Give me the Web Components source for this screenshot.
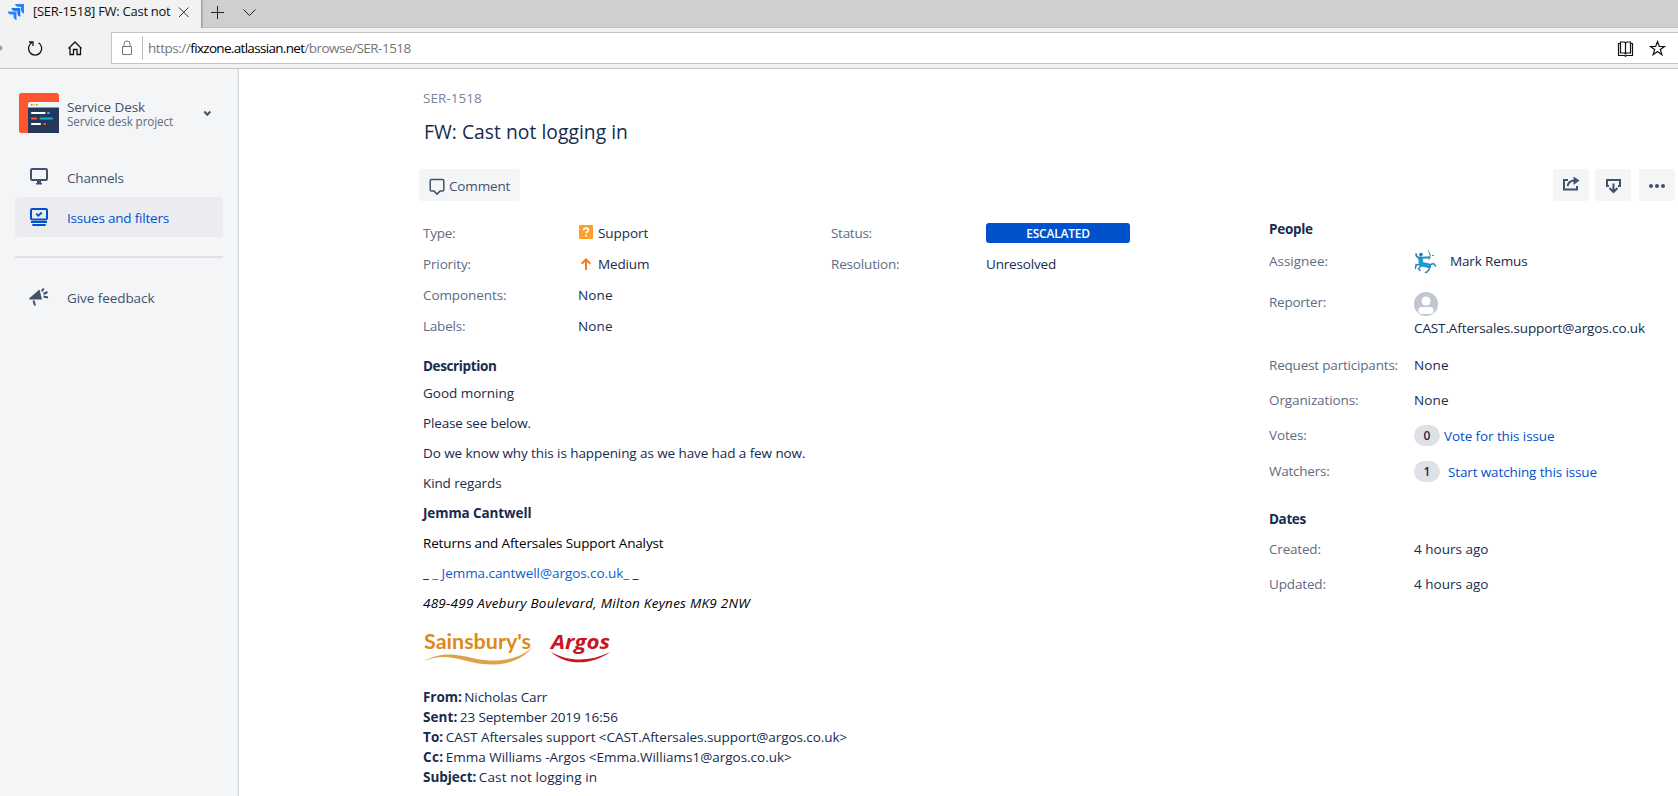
<!DOCTYPE html>
<html lang="en">
<head>
<meta charset="utf-8">
<title>[SER-1518] FW: Cast not logging in</title>
<style>
body{margin:0;background:#fff;overflow:hidden}
</style>
</head>
<body>
<app-window></app-window>
<script>
const define = (name, css, html, after) => customElements.define(name, class extends HTMLElement {
  connectedCallback() {
    if (this.shadowRoot) return;
    const t = document.createElement('template');
    t.innerHTML = `<style>*{box-sizing:border-box}${css}</style>${typeof html === 'function' ? html(this) : html}`;
    this.attachShadow({ mode: 'open' }).append(t.content.cloneNode(true));
    if (after) after(this);
  }
});

define('app-window', `
:host{display:flex;flex-direction:column;width:1678px;height:796px;overflow:hidden;font:13.5px/20px "Open Sans","Noto Sans",sans-serif;color:#172b4d}
main{display:flex;flex:1;min-height:0}`,
`<browser-tabs></browser-tabs><browser-toolbar></browser-toolbar>
<main><side-nav></side-nav><issue-page></issue-page></main>`);

define('browser-tabs', `
:host{display:flex;height:28px;background:#cfcfcf;border-bottom:1px solid #c0c0c0;flex:none}
.tab{display:flex;width:201px;height:28px;background:#f2f2f2;padding-left:7px;box-shadow:1px 0 2px #8a8a8a;clip-path:inset(0 -5px 0 0);color:#111}
.t{width:140px;margin:1px 0 0 8px;white-space:nowrap;font-size:13px}
svg{display:block;flex:none}`,
`<div class="tab">
<svg width="18" height="28" viewBox="0 0 18 28"><path d="M8 4h9v9.500a4 4 0 0 1-3-4V7h-2.200A4 4 0 0 1 8 4Z" fill="#2684ff"/><path d="M4.300 8h9v8.800a4 4 0 0 1-3-3.500V11H8a4 4 0 0 1-3.700-3Z" fill="#1f74ee"/><path d="M.5 11.500h9v8.800a4 4 0 0 1-3-3.500v-2.300H4a4 4 0 0 1-3.500-3Z" fill="#2684ff"/></svg>
<div class="t"><ui-text w="136">[SER-1518] FW: Cast not</ui-text></div>
<svg style="margin-left:4px" width="14" height="28"><path d="M2 7.500l9.500 9.500M11.500 7.500L2 17" stroke="#333" fill="none"/></svg></div>
<svg width="70" height="28" fill="none" stroke="#222"><path d="M10 12.500h13M16.500 6v13"/><path d="M42.500 9.500l6 6 6-6"/></svg>`);

define('browser-toolbar', `
:host{display:flex;height:41px;background:#f2f2f2;border-bottom:1px solid #c4c4c4;flex:none;color:#767676}
.nav{width:111px}
.bar{display:flex;flex:1;height:32px;margin-top:4px;background:#fff;border:1px solid #c4c4c4;border-right:0}
.bar i{width:1px;height:24px;margin:3px 5px 0 0;background:#bbb}
.url{flex:1;margin-top:5px;white-space:nowrap}
svg{display:block}`,
`<svg class="nav" width="111" height="40" fill="none" stroke="#111" stroke-width="1.300"><path d="M0 20h2M-1 17l3 3-3 3" stroke="#999"/><path d="M38.500 14.800a6.600 6.600 0 1 1-6.800 0M29 14h4v4"/><path d="M68.500 20.500l6.500-6.500 6.500 6.500M70 19v7.500h3.500v-5h3.500v5h3.500V19"/></svg>
<div class="bar"><svg width="30" height="30" fill="none" stroke="#767676"><path d="M10.500 13.500h9v8h-9zM12 13.500v-2.500a3 3 0 0 1 6 0v2.500"/></svg><i></i>
<div class="url"><ui-text w="41">https://</ui-text><ui-text w="112.500" style="color:#000">fixzone.atlassian.net</ui-text><ui-text w="105">/browse/SER-1518</ui-text></div>
<svg width="62" height="30" fill="none" stroke="#111" stroke-width="1.200"><path d="M9.500 10v11.500M4 10.500H2.500V22.500h6l1 .7 1-.7h6V10.500H15M4.500 9h4l1 1 1-1h4v11h-4l-1 1-1-1h-4z"/><path d="M41.500 8.500l1.800 5h5.200l-4.200 3.100 1.600 5.200-4.400-3.200-4.400 3.200 1.600-5.200-4.200-3.100h5.200z"/></svg></div>`);

define('side-nav', `
:host{display:block;width:239px;background:#f4f5f7;border-right:1px solid #d2d6dc;box-shadow:inset -1px 0 #eaecef;color:#42526e;flex:none}
.proj{display:flex;margin:24px 0 0 19px;height:40px}
.name{width:136px;margin:6px 0 0 8px}
.name div{line-height:17px;height:17px}
.name .s{font-size:11.700px;line-height:14px;height:14px;color:#5e6c84;margin-top:-2px}
hr{border:0;height:2px;background:#dfe1e6;margin:19px 15px 20px}
svg{display:block}`,
`<div class="proj"><svg width="40" height="40"><rect width="40" height="40" rx="2.500" fill="#ff5630"/><path d="M9 40V11a2 2 0 0 1 2-2h29v31z" fill="#253858"/><path d="M9 14.500V11a2 2 0 0 1 2-2h29v5.500z" fill="#f4f5f7"/><g stroke-linecap="round" stroke-width="2.200"><path d="M13 20h12.500M13 31h8" stroke="#fff"/><path d="M29 20h1" stroke="#4c9aff"/><path d="M13 25.500h4" stroke="#ff5630"/><path d="M21.500 25.500h11.500" stroke="#00b8d9"/><path d="M25.300 31h.8" stroke="#ff5630"/></g><path d="M12 11.800h1.500" stroke="#ff5630" stroke-width="1.500"/><path d="M14.500 11.800H16" stroke="#ffc400" stroke-width="1.500"/><path d="M17 11.800h1.500" stroke="#57b83c" stroke-width="1.500"/></svg>
<div class="name"><div><ui-text w="76.500">Service Desk</ui-text></div><div class="s"><ui-text w="104.500">Service desk project</ui-text></div></div>
<svg width="10" height="40"><path d="M1.300 18.500l3 3.200 3-3.200" fill="none" stroke="#42526e" stroke-width="2"/></svg></div>
<nav-item style="margin-top:24px" icon="screen"><ui-text w="55.500">Channels</ui-text></nav-item>
<nav-item active icon="queue"><ui-text w="100.500">Issues and filters</ui-text></nav-item>
<hr>
<nav-item icon="horn"><ui-text w="86">Give feedback</ui-text></nav-item>`);

const NAV_ICONS = {
  screen: '<rect x="2" y="2" width="16" height="11" rx="1.200" fill="none" stroke="currentColor" stroke-width="2"/><path d="M8 14h4v2h1v1.500H7V16h1z" fill="currentColor"/>',
  queue: '<rect x="2" y="2" width="16" height="10.500" rx="1.200" fill="none" stroke="currentColor" stroke-width="2"/><path d="M7.300 6.700l2 2 3.500-3.200M2 15h16M3.300 18h13.400" fill="none" stroke="currentColor" stroke-width="1.800"/>',
  horn: '<path d="M0 10.500L10.500 1.500 13 11.500H1Z" fill="currentColor"/><path d="M4.500 12.500l1.500 5M12.700 3.500l2-3M14.500 6l4-2M14.500 8.500l4.500 1" fill="none" stroke="currentColor" stroke-width="2"/>'
};
define('nav-item', `
:host{display:flex;align-items:center;height:40px;margin:0 15px;padding-left:14px;border-radius:3px}
:host([active]){background:#ebecf0;color:#0052cc}
svg{display:block;margin-right:18px}
div{padding-top:2px}
:host([icon=horn]) div{padding-top:0}`,
el => `<svg width="20" height="20">${NAV_ICONS[el.getAttribute('icon')]}</svg><div><slot></slot></div>`);

define('issue-page', `
:host{display:grid;grid-template-columns:1029px 1fr;flex:1;padding-left:0}
.left{padding-left:183px}
.key{margin:19px 0 0 1px;height:20px;color:#7a869a}
.title{font-size:19.300px;line-height:28px;height:28px;margin:10px 0 0 2px}
.tools{display:flex;margin-top:23px}
.details{display:grid;grid-template-columns:408px 1fr;margin-top:22px}
.badge{width:144px;height:20px;background:#0052cc;border-radius:3px;color:#fff;text-align:center;font-size:12px;font-weight:600;line-height:21px}
svg{display:block;flex:none}
.right{display:flex;flex-direction:column;padding-top:100px}
.acts{display:flex;margin-left:285px}
.p{height:20px;white-space:nowrap}
h4{margin:0;font-size:inherit;font-weight:700}
.right h4{margin-left:1px}`,
`<div class="left">
<div class="key"><ui-text w="57.500">SER-1518</ui-text></div>
<div class="title"><ui-text w="202.500">FW: Cast not logging in</ui-text></div>
<div class="tools"><tool-button style="width:101px;margin-left:-3px"><svg width="30" height="32" fill="none" stroke="#42526e" stroke-width="1.500"><path d="M12.500 10.500h11a1.300 1.300 0 0 1 1.300 1.300v9a1.300 1.300 0 0 1-1.300 1.300H21l-3 3-3-3h-2.500a1.300 1.300 0 0 1-1.300-1.300v-9a1.300 1.300 0 0 1 1.300-1.300z"/></svg><ui-text w="60" style="margin-top:2px">Comment</ui-text></tool-button></div>
<div class="details">
<div>
<data-field label="Type:" w="31"><svg width="20" height="20" style="margin-top:1px"><rect x="1" y="1" width="14" height="14" rx="1" fill="#ff991f" fill-opacity=".95"/><path d="M5.800 6.200c0-2.900 4.600-2.700 4.600-.2 0 1.700-2.200 1.700-2.200 3.300" fill="none" stroke="#fff" stroke-width="1.700"/><rect x="7.300" y="10.800" width="1.800" height="1.800" fill="#fff"/></svg><ui-text w="49">Support</ui-text></data-field>
<data-field label="Priority:" w="46.500"><svg width="20" height="20" style="margin-top:2px"><path d="M8 14V3.500M3.700 7.800L8 3.500l4.300 4.300" fill="none" stroke="#ee7d1f" stroke-width="2"/></svg><ui-text w="50">Medium</ui-text></data-field>
<data-field label="Components:" w="82"><ui-text w="33.500">None</ui-text></data-field>
<data-field label="Labels:" w="41"><ui-text w="33.500">None</ui-text></data-field>
</div><div>
<data-field label="Status:" w="39.500"><div class="badge"><ui-text w="62">ESCALATED</ui-text></div></data-field>
<data-field label="Resolution:" w="67"><ui-text w="68.500">Unresolved</ui-text></data-field>
</div></div>
<issue-description></issue-description>
</div>
<div class="right">
<div class="acts">
<tool-button style="width:36px"><svg width="36" height="32"><path d="M15 11h-4v9.500h13V17" fill="none" stroke="#42526e" stroke-width="2"/><path d="M14.500 17c1-4 3.500-5.500 7-5.500" fill="none" stroke="#42526e" stroke-width="2"/><path d="M20.500 7.500l6 4-6 4.500z" fill="#42526e"/></svg></tool-button>
<tool-button style="width:36px;margin-left:6px"><svg width="36" height="32" fill="none" stroke="#42526e" stroke-width="2"><path d="M14 17h-2v-6h13v6h-2M18.500 14.500v8M14.500 19l4 4 4-4"/></svg></tool-button>
<tool-button style="width:36px;margin-left:8px"><svg width="36" height="32" fill="#42526e"><circle cx="12" cy="17" r="2"/><circle cx="18" cy="17" r="2"/><circle cx="24" cy="17" r="2"/></svg></tool-button></div>
<h4 class="p" style="margin-top:18px"><ui-text w="42.500">People</ui-text></h4>
<data-field side style="margin-top:12px;height:41px" label="Assignee:" w="57.500"><svg width="37" height="24" style="margin:-1px 0 0 -1px"><g fill="none" stroke="#2a86bd" stroke-linecap="round" stroke-linejoin="round"><path d="M7.500 8.500L8 14l8 1.800" stroke="#1d9cd8" stroke-width="4.500"/><path d="M7.500 8l5-.5h4M6.500 8.500L3.500 6 3 4M7.500 4.800v.5" stroke-width="1.800"/><path d="M15.500 1.500c2 2 2.200 5 .3 8M19.500 5.500h1"/><path d="M6.500 15l-3.500-.5-.5 4M8 16.500l-2.500 2 1.500 2M17.500 14.500l3-1 2 2.500M17 17l-1 2.500-2 2.500-1.500.5" stroke-width="1.500"/></g><circle cx="8" cy="4.500" r="1.800" fill="#35739d"/><circle cx="15.500" cy="1" r=".7" fill="#52b7e3"/></svg><ui-text w="76">Mark Remus</ui-text></data-field>
<data-field side style="height:26px" label="Reporter:" w="55.500"><svg width="26" height="26" style="margin-left:-1px"><circle cx="13" cy="12" r="12" fill="#c1c7d0"/><circle cx="13" cy="9" r="4.500" fill="#fff"/><rect x="5.500" y="15" width="15" height="7" rx="3" fill="#fff"/></svg></data-field>
<data-field side style="height:37px" label="" w="1"><ui-text w="229.500">CAST.Aftersales.support@argos.co.uk</ui-text></data-field>
<data-field side style="height:35px" label="Request participants:" w="127.500"><ui-text w="33.500">None</ui-text></data-field>
<data-field side style="height:35px" label="Organizations:" w="88">
<ui-text w="33.500">None</ui-text></data-field>
<data-field side style="height:36px" label="Votes:" w="36.500"><count-pill>0</count-pill><ui-link style="margin-left:4px"><ui-text w="109">Vote for this issue</ui-text></ui-link></data-field>
<data-field side style="height:48px" label="Watchers:" w="59"><count-pill>1</count-pill><ui-link style="margin-left:8px"><ui-text w="147.500">Start watching this issue</ui-text></ui-link></data-field>
<h4 class="p"><ui-text w="35.500">Dates</ui-text></h4>
<data-field side style="height:35px;margin-top:10px" label="Created:" w="50.500"><ui-text w="73">4 hours ago</ui-text></data-field>
<data-field side style="height:35px" label="Updated:" w="55.500"><ui-text w="73">4 hours ago</ui-text></data-field>
</div>`);

define('tool-button', `:host{display:flex;height:32px;background:#f4f5f7;border-radius:3px;color:#42526e;align-items:center;flex:none}`, `<slot></slot>`);

define('data-field', `
:host{display:flex;height:31px;white-space:nowrap}
.l{width:156px;padding-left:1px;color:#5e6c84;flex:none}
:host([side]) .l{width:146px}`,
el => `<div class="l">${el.getAttribute('label') ? `<ui-text w="${el.getAttribute('w')}">${el.getAttribute('label')}</ui-text>` : ''}</div><slot></slot>`);

define('count-pill', `:host{display:block;width:26px;height:21px;border-radius:10.500px;background:#dfe1e6;text-align:center;font-size:12px;font-weight:600;line-height:22px;flex:none}`, `<slot></slot>`);
define('ui-link', `:host{display:block;color:#0052cc;margin-top:1px}`, `<slot></slot>`);

define('issue-description', `
:host{display:block;margin:9px 0 0 1px;white-space:nowrap}
p{margin:0;height:30px}
h4,b{font-size:inherit;font-weight:700;margin:0}
h4{height:27px}
.blk{color:#000}
a{color:#0b5fc6}
.logos{display:flex;height:64px}
.m{display:flex;gap:2.500px;height:20px}
svg{display:block}`,
`<h4><ui-text w="72">Description</ui-text></h4>
<p><ui-text w="89.500">Good morning</ui-text></p>
<p><ui-text w="106.500">Please see below.</ui-text></p>
<p><ui-text w="381">Do we know why this is happening as we have had a few now.</ui-text></p>
<p><ui-text w="77">Kind regards</ui-text></p>
<p><b><ui-text w="107">Jemma Cantwell</ui-text></b></p>
<p class="blk"><ui-text w="239">Returns and Aftersales Support Analyst</ui-text></p>
<p class="blk"><ui-text w="214">_ <a>_ Jemma.cantwell@argos.co.uk_</a> _</ui-text></p>
<p class="blk"><i><ui-text w="325.500">489-499 Avebury Boulevard, Milton Keynes MK9 2NW</ui-text></i></p>
<div class="logos"><svg width="200" height="50"><g transform="translate(1 1)"><text x="0" y="25" font-family="Lato,sans-serif" font-weight="700" font-size="20.500" textLength="107" lengthAdjust="spacingAndGlyphs" fill="#dd8a1c">Sainsbury's</text><path d="M0 37c24-13 42-3 60-1 19 2 34-1 48-12-12 14-31 18-49 16-18-1.500-36-13-59-3z" fill="#dfa04a"/><text x="127" y="25" font-family="Open Sans,sans-serif" font-style="italic" font-weight="700" font-size="20" textLength="59" lengthAdjust="spacingAndGlyphs" fill="#c8161d">Argos</text><path d="M127 28c18 10 39 10 59 0-18 13.500-44 14-59 0z" fill="#c8161d"/></g></svg></div>
<div class="m"><b><ui-text w="37.500">From:</ui-text></b><ui-text w="81.500">Nicholas Carr</ui-text></div>
<div class="m"><b><ui-text w="33">Sent:</ui-text></b><ui-text w="156.500">23 September 2019 16:56</ui-text></div>
<div class="m"><b><ui-text w="19">To:</ui-text></b><ui-text w="400">CAST Aftersales support &lt;CAST.Aftersales.support@argos.co.uk&gt;</ui-text></div>
<div class="m"><b><ui-text w="19">Cc:</ui-text></b><ui-text w="344.500">Emma Williams -Argos &lt;Emma.Williams1@argos.co.uk&gt;</ui-text></div>
<div class="m"><b><ui-text w="52">Subject:</ui-text></b><ui-text w="117">Cast not logging in</ui-text></div>`);

// Tracks a line of text out or in so that it takes the width given by w.
define('ui-text', `:host{display:inline-block;white-space:nowrap;flex:none}`, `<slot></slot>`, el => {
  const w = parseFloat(el.getAttribute('w'));
  el.style.letterSpacing = '0.001px';
  const n = el.textContent.length, nat = el.getBoundingClientRect().width;
  const bearing = n > 8 ? 1.5 : 1.3;
  if (w && nat) el.style.letterSpacing = ((w + bearing - nat) / n).toFixed(4) + 'px';
});
</script>
</body>
</html>
